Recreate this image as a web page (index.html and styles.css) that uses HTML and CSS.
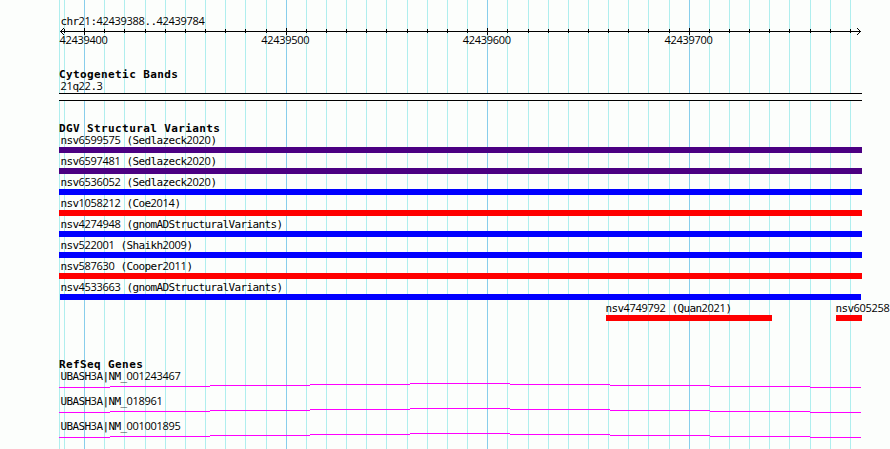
FILE: index.html
```html
<!DOCTYPE html>
<html lang="en">
<head>
    <meta charset="UTF-8">
    <meta name="viewport" content="width=device-width, initial-scale=1.0">
    <title>chr21:42439388..42439784</title>
    <link rel="stylesheet" href="styles.css">
</head>
<body>
    <div class="browser">
        <svg class="grid" width="890" height="449" shape-rendering="crispEdges">
            <path class="minor" d="M59.5 0v449M64.5 0v449M104.5 0v449M124.5 0v449M145.5 0v449M165.5 0v449M185.5 0v449M205.5 0v449M225.5 0v449M245.5 0v449M266.5 0v449M306.5 0v449M326.5 0v449M346.5 0v449M366.5 0v449M386.5 0v449M407.5 0v449M427.5 0v449M447.5 0v449M467.5 0v449M507.5 0v449M528.5 0v449M548.5 0v449M568.5 0v449M588.5 0v449M608.5 0v449M628.5 0v449M648.5 0v449M669.5 0v449M709.5 0v449M729.5 0v449M749.5 0v449M769.5 0v449M789.5 0v449M810.5 0v449M830.5 0v449M850.5 0v449"/>
            <path class="major" d="M84.5 0v449M286.5 0v449M487.5 0v449M689.5 0v449"/>
        </svg>

        <div class="tracks">
            <div class="ruler">
                <div class="name">chr<i>21</i>:<i>42439388</i>..<i>42439784</i></div>
                <svg class="axis" width="803" height="7" shape-rendering="crispEdges">
                    <path d="M1 3.5h801"/>
                    <path d="M5.5 1v4M45.5 1v4M65.5 1v4M86.5 1v4M106.5 1v4M126.5 1v4M146.5 1v4M166.5 1v4M186.5 1v4M207.5 1v4M247.5 1v4M267.5 1v4M287.5 1v4M307.5 1v4M327.5 1v4M348.5 1v4M368.5 1v4M388.5 1v4M408.5 1v4M448.5 1v4M469.5 1v4M489.5 1v4M509.5 1v4M529.5 1v4M549.5 1v4M569.5 1v4M589.5 1v4M610.5 1v4M650.5 1v4M670.5 1v4M690.5 1v4M710.5 1v4M730.5 1v4M751.5 1v4M771.5 1v4M791.5 1v4"/>
                    <path d="M25.5 0v7M227.5 0v7M428.5 0v7M630.5 0v7"/>
                    <path d="M4 .5h1M3 1.5h1M2 2.5h1M2 4.5h1M3 5.5h1M4 6.5h1M798 .5h1M799 1.5h1M800 2.5h1M800 4.5h1M799 5.5h1M798 6.5h1"/>
                </svg>
                <div class="scale">
                    <i>42439400</i>
                    <i>42439500</i>
                    <i>42439600</i>
                    <i>42439700</i>
                </div>
            </div>

            <div class="track bands">
                <h2>Cytogenetic Bands</h2>
                <div class="name"><i>21</i>q<i>22</i>.<i>3</i></div>
                <div class="band"></div>
            </div>

            <div class="track variants">
                <h2>DGV Structural Variants</h2>
                <div class="feature purple"><div class="name">nsv<i>6599575</i> (Sedlazeck<i>2020</i>)</div></div>
                <div class="feature purple"><div class="name">nsv<i>6597481</i> (Sedlazeck<i>2020</i>)</div></div>
                <div class="feature blue"><div class="name">nsv<i>6536052</i> (Sedlazeck<i>2020</i>)</div></div>
                <div class="feature red"><div class="name">nsv<i>1058212</i> (Coe<i>2014</i>)</div></div>
                <div class="feature blue"><div class="name">nsv<i>4274948</i> (gnomADStructuralVariants)</div></div>
                <div class="feature blue"><div class="name">nsv<i>522001</i> (Shaikh<i>2009</i>)</div></div>
                <div class="feature red"><div class="name">nsv<i>587630</i> (Cooper<i>2011</i>)</div></div>
                <div class="feature blue inset"><div class="name">nsv<i>4533663</i> (gnomADStructuralVariants)</div></div>
                <div class="row">
                    <div class="feature red quan"><div class="name">nsv<i>4749792</i> (Quan<i>2021</i>)</div></div>
                    <div class="feature red cut"><div class="name">nsv<i>605258</i></div></div>
                </div>
            </div>

            <div class="track genes">
                <h2>RefSeq Genes</h2>
                <div class="gene">
                    <div class="name">UBASH<i>3</i>A|NM_<i>001243467</i></div>
                    <svg width="803" height="5" shape-rendering="crispEdges"><path d="M0 4.5h51M51 3.5h100M151 2.5h100M251 1.5h100M351 .5h100M451 1.5h100M551 2.5h100M651 3.5h100M751 4.5h51"/></svg>
                </div>
                <div class="gene">
                    <div class="name">UBASH<i>3</i>A|NM_<i>018961</i></div>
                    <svg width="803" height="5" shape-rendering="crispEdges"><path d="M0 4.5h51M51 3.5h100M151 2.5h100M251 1.5h100M351 .5h100M451 1.5h100M551 2.5h100M651 3.5h100M751 4.5h51"/></svg>
                </div>
                <div class="gene">
                    <div class="name">UBASH<i>3</i>A|NM_<i>001001895</i></div>
                    <svg width="803" height="5" shape-rendering="crispEdges"><path d="M0 4.5h51M51 3.5h100M151 2.5h100M251 1.5h100M351 .5h100M451 1.5h100M551 2.5h100M651 3.5h100M751 4.5h51"/></svg>
                </div>
            </div>
        </div>
    </div>
</body>
</html>
```
FILE: styles.css
```css
body {
    margin: 0;
    background-color: #fcfefc;
}

.browser {
    position: relative;
    width: 890px;
    height: 449px;
    overflow: hidden;
    color: #000;
    font: 11px/13px "DejaVu Sans Mono", monospace;
    letter-spacing: -0.622px;
}

.browser svg {
    display: block;
    fill: none;
    stroke: #000;
}

/* guide lines run behind every track */
.browser .grid {
    position: absolute;
    top: 0;
    left: 0;
}

.grid .minor {
    stroke: #afeeee;
}

.grid .major {
    stroke: #87ceeb;
}

.tracks {
    position: relative;
    width: 803px;
    padding: 15px 0 0 59px;
}

/* digits use a face with a plain zero */
i {
    font-family: "Open Sans", sans-serif;
    font-style: normal;
    line-height: 0;
    letter-spacing: -0.292px;
}

.name {
    height: 13px;
    padding-left: 1.4px;
    white-space: nowrap;
}

.ruler {
    height: 53px;
}

.axis {
    margin-bottom: -2px;
}

.scale {
    display: flex;
    gap: 153.67px;
    padding-left: 0.5px;
}

.scale i {
    width: 48px;
    line-height: 13px;
}

h2 {
    height: 12px;
    margin: 0;
    font-size: 11px;
    line-height: 13px;
    letter-spacing: 0.39px;
}

.bands {
    height: 54px;
}

.band {
    height: 6px;
    border-top: 1px solid #000;
    border-bottom: 1px solid #000;
    background-color: #fcfefc;
}

.variants {
    height: 236px;
}

.feature {
    height: 21px;
}

.feature::after {
    content: '';
    display: block;
    height: 6px;
}

.purple::after {
    background-color: #4b0082;
}

.blue::after {
    background-color: #00f;
}

.red::after {
    background-color: #f00;
}

.inset::after {
    margin: 0 1px;
}

.row {
    display: flex;
    padding-left: 547px;
}

.row .name {
    padding-left: 0;
    margin-left: -0.6px;
}

.quan {
    width: 166px;
    margin-right: 64px;
}

.cut {
    width: 26px;
}

.gene {
    height: 25px;
}

.gene svg {
    stroke: #f0f;
}
```
